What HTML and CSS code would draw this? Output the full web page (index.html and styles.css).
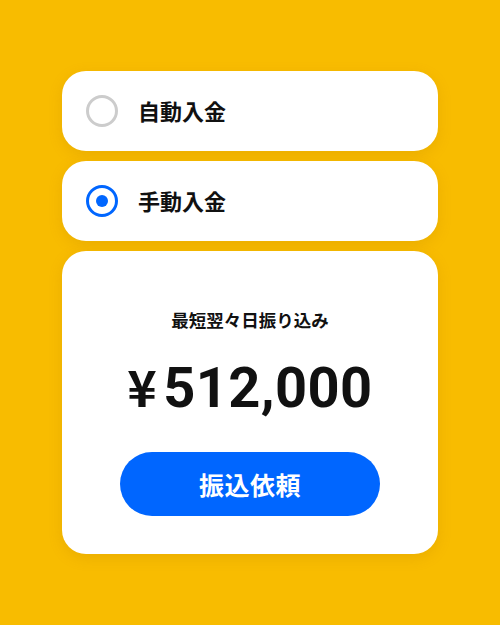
FILE: index.html
```html
<!DOCTYPE html>
<html lang="ja">
<head>
<meta charset="utf-8">
<link rel="stylesheet" href="styles.css">
</head>
<body>
<main class="stack">
  <div class="card option">
    <span class="radio"></span>
    <span class="label">自動入金</span>
  </div>
  <div class="card option">
    <span class="radio checked"></span>
    <span class="label">手動入金</span>
  </div>
  <div class="card summary">
    <p class="note">最短翌々日振り込み</p>
    <p class="amount"><span class="yen">¥</span>512,000</p>
    <button class="cta">振込依頼</button>
  </div>
</main>
</body>
</html>
```
FILE: styles.css
```css
html, body {
  margin: 0;
  padding: 0;
  background: #F8BC00;
  width: 500px;
  height: 625px;
  overflow: hidden;
  font-family: "Noto Sans CJK JP", "Noto Sans", sans-serif;
  color: #111;
}
.stack {
  width: 376px;
  margin: 71px auto 0;
  display: flex;
  flex-direction: column;
  gap: 10px;
}
.card {
  background: #fff;
  border-radius: 24px;
  box-shadow: 0 4px 14px rgba(180, 110, 0, 0.18);
}
.option {
  height: 80px;
  display: flex;
  align-items: center;
  padding-left: 24px;
  box-sizing: border-box;
}
.radio {
  width: 32px;
  height: 32px;
  box-sizing: border-box;
  border: 3px solid #CCCCCC;
  border-radius: 50%;
  display: flex;
  align-items: center;
  justify-content: center;
}
.radio.checked {
  border-color: #0066FF;
}
.radio.checked::after {
  content: "";
  width: 12px;
  height: 12px;
  border-radius: 50%;
  background: #0066FF;
}
.label {
  margin-left: 20px;
  font-size: 22px;
  font-weight: 700;
  line-height: 28px;
  margin-top: -2px;
}
.summary {
  height: 303px;
  display: flex;
  flex-direction: column;
  align-items: center;
  padding-top: 56px;
  box-sizing: border-box;
}
.note {
  margin: 0;
  font-size: 17.5px;
  font-weight: 700;
  line-height: 26px;
}
.amount {
  margin: 16px 0 0;
  font-family: "Roboto", "Noto Sans CJK JP", sans-serif;
  font-size: 56px;
  font-weight: 700;
  line-height: 72px;
  letter-spacing: 0.4px;
}
.yen {
  font-family: "Noto Sans CJK JP", sans-serif;
  font-weight: 700;
  font-size: 50px;
  margin-right: 6px;
}
.cta {
  margin-top: 28px;
  width: 260px;
  height: 64px;
  border: none;
  border-radius: 32px;
  background: #0066FF;
  color: #fff;
  font-family: "Noto Sans CJK JP", sans-serif;
  font-size: 25px;
  font-weight: 700;
  letter-spacing: 0.5px;
}
```
